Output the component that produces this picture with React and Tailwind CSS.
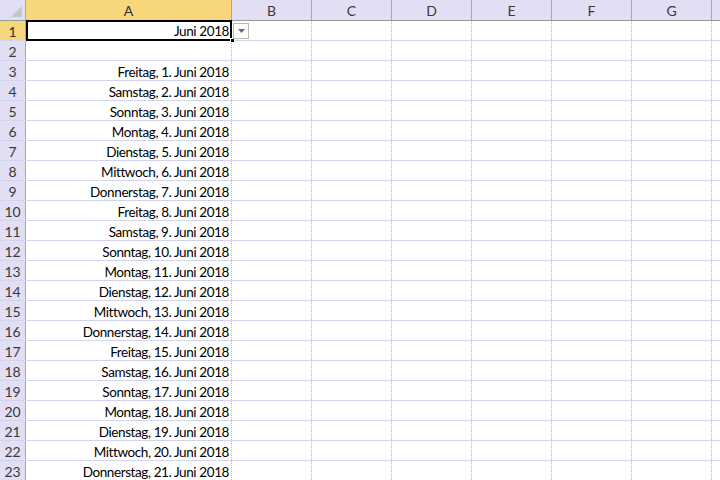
import React from "react";

const days = ["Freitag","Samstag","Sonntag","Montag","Dienstag","Mittwoch","Donnerstag"];
const rows = [];
for (let i = 0; i < 21; i++) {
  rows.push(`${days[i % 7]}, ${i + 1}. Juni 2018`);
}
const cols = ["B", "C", "D", "E", "F", "G"];

function RowHeader({ n, sel }) {
  return (
    <div
      className={
        "w-[26px] shrink-0 h-full border-r border-r-[#9cae9c] flex items-center justify-center pt-[2px] text-[14px] " +
        (sel ? "bg-[#f7d67c] text-[#333]" : "bg-[#e2def4] text-[#3a3a3a]")
      }
    >
      {n}
    </div>
  );
}

function EmptyCells() {
  return (
    <>
      {cols.map((c) => (
        <div key={c} className="w-[80px] shrink-0 h-full border-r border-dotted border-r-[#a9b6ef]" />
      ))}
      <div className="flex-1 h-full" />
    </>
  );
}

export default function App() {
  return (
    <div
      className="w-[720px] h-[480px] overflow-hidden bg-white flex flex-col"
      style={{ fontFamily: "Lato, 'Open Sans', sans-serif" }}
    >
      {/* header row */}
      <div className="h-[21px] shrink-0 flex border-b border-b-[#8f9f8f]">
        <div className="w-[26px] shrink-0 h-full bg-[#e2def4] border-r border-r-[#9cae9c] relative">
          <svg className="absolute right-[3px] bottom-[3px]" width="11" height="11" viewBox="0 0 11 11">
            <polygon points="11,0 11,11 0,11" fill="#c4c8c4" />
          </svg>
        </div>
        <div className="w-[206px] shrink-0 h-full bg-[#f7d67c] border-r border-r-[#c9a64e] flex items-center justify-center pt-[1px] text-[14px] text-[#333]">
          A
        </div>
        {cols.map((c) => (
          <div
            key={c}
            className="w-[80px] shrink-0 h-full bg-[#e2def4] border-r border-r-[#9cae9c] flex items-center justify-center pt-[1px] text-[14px] text-[#3a3a3a]"
          >
            {c}
          </div>
        ))}
        <div className="flex-1 h-full bg-[#e2def4]" />
      </div>

      {/* row 1 */}
      <div className="h-[20px] shrink-0 flex border-b border-b-[#d2d4ef] relative">
        <RowHeader n={1} sel />
        <div className="w-[206px] shrink-0 h-full relative">
          <div className="absolute left-0 top-[-1px] w-[206px] h-[21px] border-2 border-black flex items-center justify-end pr-[1px] pt-[2px] text-[13.5px] tracking-[-0.4px] text-black">
            Juni 2018
          </div>
          <div className="absolute right-[-3px] bottom-[-3px] w-[5px] h-[5px] bg-black border border-white" />
        </div>
        <div className="w-[80px] shrink-0 h-full border-r border-dotted border-r-[#a9b6ef] relative">
          <div className="absolute left-[1px] top-[2px] w-[16px] h-[16px] border border-[#b7bfa7] bg-white flex items-center justify-center">
            <svg width="7" height="4" viewBox="0 0 7 4">
              <polygon points="0,0 7,0 3.5,4" fill="#6a6a6a" />
            </svg>
          </div>
        </div>
        {cols.slice(1).map((c) => (
          <div key={c} className="w-[80px] shrink-0 h-full border-r border-dotted border-r-[#a9b6ef]" />
        ))}
        <div className="flex-1 h-full" />
      </div>

      {/* row 2 */}
      <div className="h-[20px] shrink-0 flex border-b border-b-[#d2d4ef]">
        <RowHeader n={2} />
        <div className="w-[206px] shrink-0 h-full border-r border-dotted border-r-[#a9b6ef]" />
        <EmptyCells />
      </div>

      {rows.map((text, i) => (
        <div key={i} className="h-[20px] shrink-0 flex border-b border-b-[#d2d4ef]">
          <RowHeader n={i + 3} />
          <div className="w-[206px] shrink-0 h-full border-r border-dotted border-r-[#a9b6ef] flex items-center justify-end pr-[2px] pt-[3px] text-[13.5px] tracking-[-0.4px] text-black whitespace-nowrap">
            {text}
          </div>
          <EmptyCells />
        </div>
      ))}
    </div>
  );
}
